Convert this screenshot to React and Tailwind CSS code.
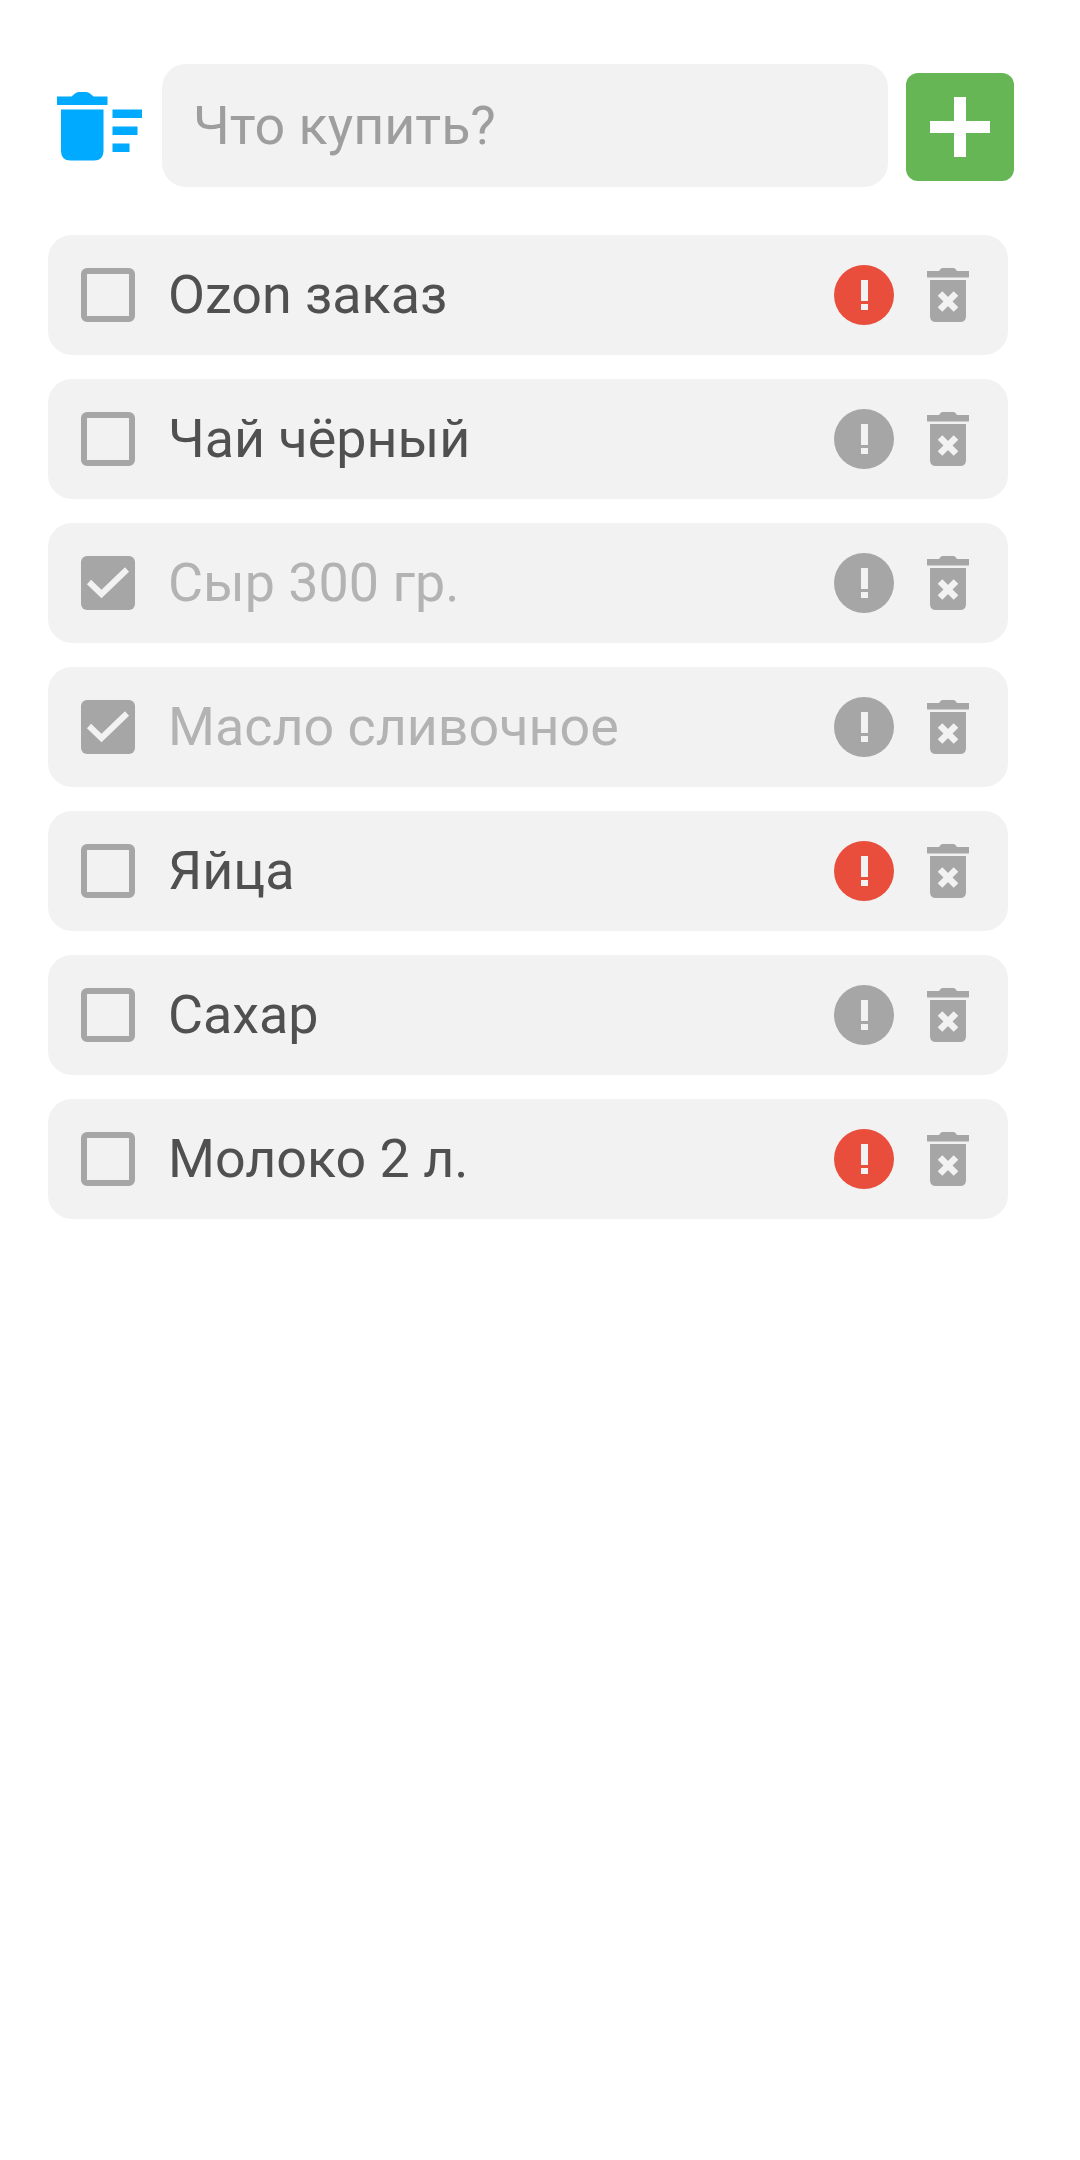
const items = [
  { title: "Ozon заказ", urgent: true, done: false },
  { title: "Чай чёрный", urgent: false, done: false },
  { title: "Сыр 300 гр.", urgent: false, done: true },
  { title: "Масло сливочное", urgent: false, done: true },
  { title: "Яйца", urgent: true, done: false },
  { title: "Сахар", urgent: false, done: false },
  { title: "Молоко 2 л.", urgent: true, done: false },
];

const LogoIcon = () => {
  return (
    <svg width="85" height="69" viewBox="0 0 85 69" className="shrink-0 mt-[28px] text-[#00aaff]" fill="currentColor">
      <path d="M0 4.5h14.5L18 1.5Q19.5 0 22 0h7q2.500 0 4 1.500L36.500 4.500H50.500V13H0z" />
      <path d="M4 17.500H46.500V59Q46.500 68.500 37 68.500H13.500Q4 68.500 4 59z" />
      <rect x="55.500" y="17.500" width="29.500" height="8.500" />
      <rect x="55.500" y="34.500" width="25" height="8.500" />
      <rect x="55.500" y="51.500" width="17" height="8.500" />
    </svg>
  );
};

const PlusIcon = () => {
  return (
    <svg width="60" height="60" viewBox="0 0 60 60" fill="#ffffff">
      <rect x="24" y="0" width="12" height="60" />
      <rect x="0" y="24" width="60" height="12" />
    </svg>
  );
};

const Checkbox = ({ checked }) => {
  if (checked) {
    return (
      <div className="flex items-center justify-center w-[54px] h-[54px] shrink-0 rounded-[6px] bg-[#a6a6a6]">
        <svg width="54" height="54" viewBox="0 0 54 54" fill="none" stroke="#f2f2f2" strokeWidth="6">
          <path d="M8 26L20.500 38L46 13.500" />
        </svg>
      </div>
    );
  }
  return <div className="w-[54px] h-[54px] shrink-0 rounded-[6px] border-[6px] border-[#a6a6a6]" />;
};

const AlertIcon = ({ urgent }) => {
  return (
    <div
      className={`flex flex-col items-center w-[60px] h-[60px] shrink-0 rounded-full pt-[15px] ${
        urgent ? "bg-[#e94e3d]" : "bg-[#a6a6a6]"
      }`}
    >
      <div className="w-[7px] h-[21px] bg-[#f2f2f2]" />
      <div className="w-[7px] h-[6px] mt-[3px] bg-[#f2f2f2]" />
    </div>
  );
};

const TrashIcon = () => {
  return (
    <svg width="42" height="54" viewBox="0 0 42 54" className="block shrink-0" fill="#a6a6a6">
      <path d="M0 3H12L13.500 1Q14.500 0 16 0H26Q27.500 0 28.500 1L30 3H42V9.500H0z" />
      <path d="M3 12H39V48Q39 54 33 54H9Q3 54 3 48z" />
      <path d="M13 25.500L29 41.500M29 25.500L13 41.500" stroke="#f2f2f2" strokeWidth="6.500" fill="none" />
    </svg>
  );
};

const Row = ({ title, urgent, done }) => {
  return (
    <div className="flex items-center h-[120px] pl-[33px] pr-[39px] rounded-[24px] bg-[#f2f2f2]">
      <Checkbox checked={done} />
      <span className={`flex-1 ml-[33px] text-[53.8px] leading-none ${done ? "text-[#b3b3b3]" : "text-[#505050]"}`}>
        {title}
      </span>
      <AlertIcon urgent={urgent} />
      <div className="ml-[33px]">
        <TrashIcon />
      </div>
    </div>
  );
};

export default function App() {
  return (
    <div className="w-[1080px] h-[2160px] bg-white font-['Roboto',sans-serif]">
      <div className="flex items-start pt-[64px] pl-[57px] pr-[66px]">
        <LogoIcon />
        <div className="flex items-center flex-1 h-[123px] ml-[20px] pl-[31px] rounded-[24px] bg-[#f2f2f2] text-[53.8px] leading-none text-[#9e9e9e]">
          Что купить?
        </div>
        <button className="flex items-center justify-center w-[108px] h-[108px] mt-[9px] ml-[18px] rounded-[12px] bg-[#66b655]">
          <PlusIcon />
        </button>
      </div>
      <div className="flex flex-col gap-[24px] mt-[48px] ml-[48px] w-[960px]">
        {items.map((item) => (
          <Row key={item.title} {...item} />
        ))}
      </div>
    </div>
  );
}
